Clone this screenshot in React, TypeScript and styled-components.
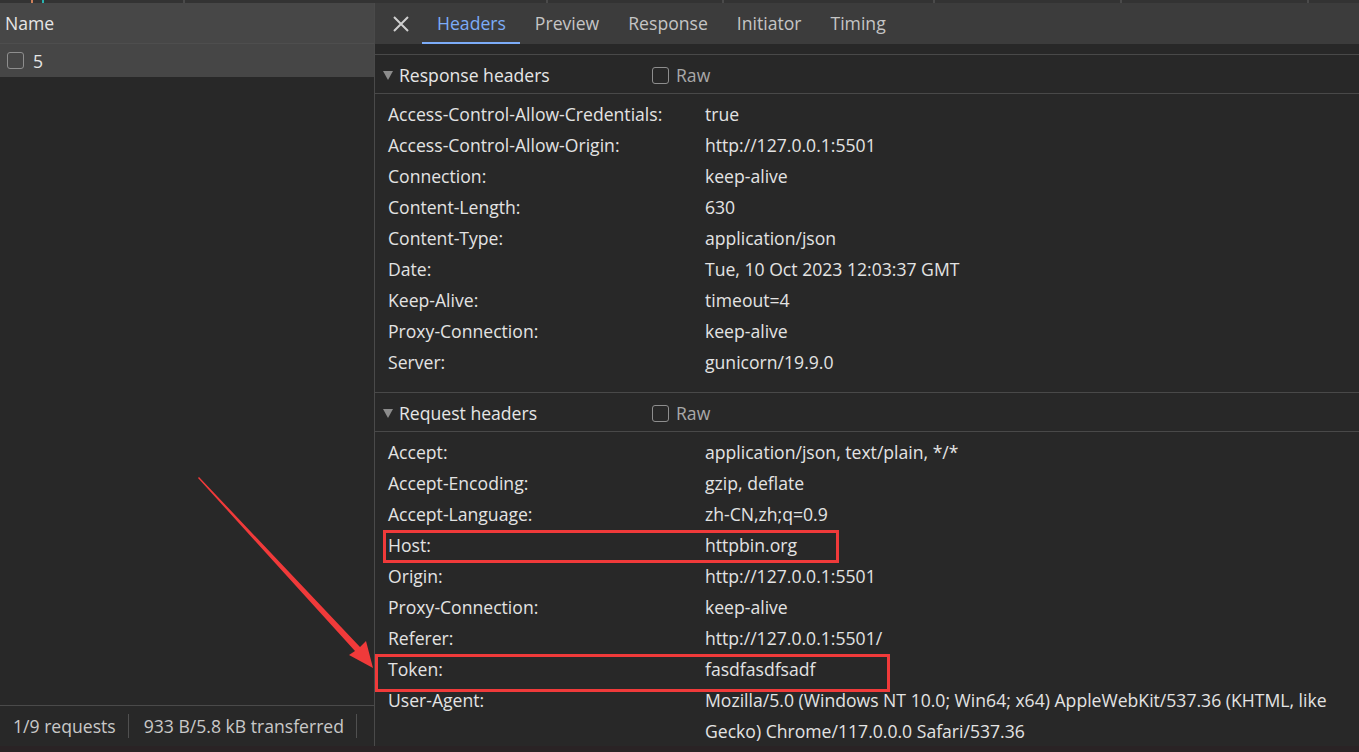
import React from "react";
import styled, { createGlobalStyle } from "styled-components";

const Global = createGlobalStyle`
  html, body { margin: 0; padding: 0; background: #282828; }
  body { font-family: "Open Sans", "Noto Sans", sans-serif; color: #e3e3e3; overflow: hidden; }
  * { box-sizing: border-box; }
`;

const FS = "17.6px";

const Page = styled.div`
  width: 1359px;
  height: 752px;
  display: flex;
  flex-direction: column;
  position: relative;
  background: #282828;
`;

const TopStrip = styled.div`
  height: 3px;
  background: #333333;
  position: relative;
  flex: none;
`;

const StripMark = styled.span<{ $x: number; $c: string }>`
  position: absolute;
  top: 0;
  left: ${(p) => p.$x}px;
  width: 2px;
  height: 3px;
  background: ${(p) => p.$c};
`;

const Main = styled.div`
  flex: 1;
  display: flex;
  min-height: 0;
`;

const BottomStrip = styled.div`
  height: 6px;
  background: #2a2325;
  flex: none;
`;

const Left = styled.div`
  width: 375px;
  border-right: 1px solid #4a4a4a;
  display: flex;
  flex-direction: column;
  flex: none;
`;

const NameHeader = styled.div`
  height: 41px;
  background: #474747;
  border-bottom: 1px solid #4e4e4e;
  display: flex;
  align-items: center;
  padding-left: 5px;
  font-size: ${FS};
  color: #e6e6e6;
`;

const RequestRow = styled.div`
  height: 33px;
  background: #464646;
  display: flex;
  align-items: center;
  padding-left: 7px;
  gap: 9px;
  font-size: ${FS};
  color: #e6e6e6;
`;

const Box = styled.span<{ $size?: number }>`
  width: ${(p) => p.$size ?? 17}px;
  height: ${(p) => p.$size ?? 17}px;
  border: 1.5px solid #8e8e8e;
  border-radius: 3px;
  display: inline-block;
  flex: none;
`;

const LeftBody = styled.div`
  flex: 1;
`;

const Footer = styled.div`
  height: 41px;
  border-top: 1px solid #4a4a4a;
  display: flex;
  align-items: center;
  padding-left: 13px;
  font-size: ${FS};
  color: #c8c8c8;
`;

const FooterItem = styled.span`
  padding-right: 12px;
  margin-right: 15px;
  border-right: 1px solid #505050;
  line-height: 24px;
`;

const Right = styled.div`
  flex: 1;
  display: flex;
  flex-direction: column;
  min-width: 0;
`;

const TabBar = styled.div`
  height: 41px;
  background: #3c3c3c;
  display: flex;
  align-items: stretch;
  padding-left: 10px;
  flex: none;
`;

const CloseBtn = styled.div`
  width: 32px;
  display: flex;
  align-items: center;
  justify-content: center;
  margin-right: 5px;
`;

const Tab = styled.div<{ $active?: boolean }>`
  padding: 0 14px 0 15px;
  display: flex;
  align-items: center;
  font-size: ${FS};
  color: ${(p) => (p.$active ? "#7cacf8" : "#c5c5c5")};
  border-bottom: 2px solid ${(p) => (p.$active ? "#7cacf8" : "transparent")};
  padding-top: 1px;
`;

const Gap = styled.div`
  height: 11px;
  border-bottom: 1px solid #494949;
  flex: none;
`;

const SectionHeader = styled.div`
  height: 39px;
  border-bottom: 1px solid #494949;
  display: flex;
  align-items: center;
  padding-left: 8px;
  padding-top: 2px;
  font-size: ${FS};
  color: #e6e6e6;
  flex: none;
`;

const Triangle = styled.span`
  width: 0;
  height: 0;
  border-left: 5px solid transparent;
  border-right: 5px solid transparent;
  border-top: 9px solid #8c8c8c;
  margin-right: 6px;
  margin-top: 1px;
`;

const SectionTitle = styled.span`
  width: 253px;
`;

const RawLabel = styled.span`
  display: flex;
  align-items: center;
  gap: 7px;
  color: #a8a8a8;
`;

const Rows = styled.div<{ $bottom: number }>`
  padding: 5px 0 ${(p) => p.$bottom}px 0;
  border-bottom: 1px solid #494949;
`;

const Row = styled.div`
  display: grid;
  grid-template-columns: 317px 1fr;
  padding-left: 13px;
  font-size: ${FS};
  line-height: 31px;
  color: #e3e3e3;
  white-space: nowrap;
`;

const Overlay = styled.svg`
  position: absolute;
  left: 0;
  top: 0;
  pointer-events: none;
`;

const responseHeaders: [string, string][] = [
  ["Access-Control-Allow-Credentials:", "true"],
  ["Access-Control-Allow-Origin:", "http://127.0.0.1:5501"],
  ["Connection:", "keep-alive"],
  ["Content-Length:", "630"],
  ["Content-Type:", "application/json"],
  ["Date:", "Tue, 10 Oct 2023 12:03:37 GMT"],
  ["Keep-Alive:", "timeout=4"],
  ["Proxy-Connection:", "keep-alive"],
  ["Server:", "gunicorn/19.9.0"],
];

const requestHeaders: [string, React.ReactNode][] = [
  ["Accept:", "application/json, text/plain, */*"],
  ["Accept-Encoding:", "gzip, deflate"],
  ["Accept-Language:", "zh-CN,zh;q=0.9"],
  ["Host:", "httpbin.org"],
  ["Origin:", "http://127.0.0.1:5501"],
  ["Proxy-Connection:", "keep-alive"],
  ["Referer:", "http://127.0.0.1:5501/"],
  ["Token:", "fasdfasdfsadf"],
  [
    "User-Agent:",
    <>
      Mozilla/5.0 (Windows NT 10.0; Win64; x64) AppleWebKit/537.36 (KHTML, like
      <br />
      Gecko) Chrome/117.0.0.0 Safari/537.36
    </>,
  ],
];

export default function App() {
  return (
    <Page>
      <Global />
      <TopStrip>
        <StripMark $x={31} $c="#d0805a" />
        <StripMark $x={42} $c="#2ab3b0" />
        <StripMark $x={183} $c="#4a4a4a" />
        <StripMark $x={546} $c="#4a4a4a" />
        <StripMark $x={722} $c="#4a4a4a" />
        <StripMark $x={933} $c="#4a4a4a" />
        <StripMark $x={1120} $c="#4a4a4a" />
        <StripMark $x={1307} $c="#4a4a4a" />
      </TopStrip>
      <Main>
        <Left>
          <NameHeader>Name</NameHeader>
          <RequestRow>
            <Box />
            <span>5</span>
          </RequestRow>
          <LeftBody />
          <Footer>
            <FooterItem>1/9 requests</FooterItem>
            <FooterItem>933 B/5.8 kB transferred</FooterItem>
          </Footer>
        </Left>
        <Right>
          <TabBar>
            <CloseBtn>
              <svg width="18" height="18" viewBox="0 0 18 18">
                <path d="M2 2L16 16M16 2L2 16" stroke="#cfcfcf" strokeWidth="2" />
              </svg>
            </CloseBtn>
            <Tab $active>Headers</Tab>
            <Tab>Preview</Tab>
            <Tab>Response</Tab>
            <Tab>Initiator</Tab>
            <Tab>Timing</Tab>
          </TabBar>
          <Gap />
          <SectionHeader>
            <Triangle />
            <SectionTitle>Response headers</SectionTitle>
            <RawLabel>
              <Box />
              Raw
            </RawLabel>
          </SectionHeader>
          <Rows $bottom={14}>
            {responseHeaders.map(([k, v]) => (
              <Row key={k}>
                <span>{k}</span>
                <span>{v}</span>
              </Row>
            ))}
          </Rows>
          <SectionHeader>
            <Triangle />
            <SectionTitle>Request headers</SectionTitle>
            <RawLabel>
              <Box />
              Raw
            </RawLabel>
          </SectionHeader>
          <Rows $bottom={0}>
            {requestHeaders.map(([k, v]) => (
              <Row key={k}>
                <span>{k}</span>
                <span>{v}</span>
              </Row>
            ))}
          </Rows>
        </Right>
      </Main>
      <BottomStrip />
      <Overlay width="1359" height="752" viewBox="0 0 1359 752">
        <rect x="384.5" y="531.5" width="453" height="30" fill="none" stroke="#f03a3a" strokeWidth="3" />
        <rect x="376.5" y="655.5" width="512" height="35" fill="none" stroke="#f03a3a" strokeWidth="3" />
        <polygon
          points="198,478 199,477 360,647 366,641 373,668 349,655 355,651"
          fill="#f03a3a"
        />
      </Overlay>
    </Page>
  );
}
